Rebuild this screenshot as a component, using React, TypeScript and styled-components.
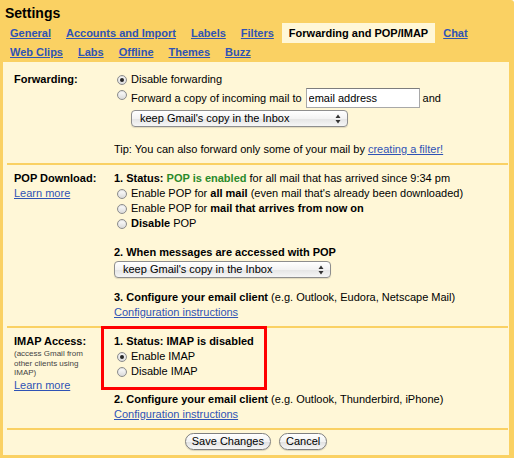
import React from "react";
import styled, { createGlobalStyle, css } from "styled-components";

const GlobalStyle = createGlobalStyle`
  body {
    margin: 0;
    background: #ffffff;
    font-family: "Liberation Sans", Arial, sans-serif;
    font-size: 11px;
    color: #000;
  }
`;

const Frame = styled.div`
  width: 514px;
  box-sizing: border-box;
  padding: 0 5px 3px 3px;
  background: #fad163;
  border-top-right-radius: 3px;
`;

const Title = styled.h1`
  margin: 0;
  padding: 4px 0 0 2px;
  font-size: 14px;
  line-height: 18px;
  font-weight: bold;
`;

const Tabs = styled.div`
  margin-top: 1px;
`;

const TabRow = styled.div`
  display: flex;
  height: 19px;
`;

const Tab = styled.a<{ $active?: boolean }>`
  display: block;
  height: 20px;
  padding: 0 7px;
  margin-right: 1px;
  line-height: 20px;
  font-weight: bold;
  color: #2f53b5;
  text-decoration: underline;
  white-space: nowrap;
  cursor: pointer;

  ${({ $active }) =>
    $active &&
    css`
      background: #fff7d7;
      color: #000;
      text-decoration: none;
    `}
`;

const Panel = styled.div`
  margin-top: 1px;
  padding-top: 4px;
  background: #fff7d7;
`;

const Section = styled.div`
  display: grid;
  grid-template-columns: 100px 1fr;
  margin: 0 1px 0 4px;
  padding: 6px 0 6px 7px;
  border-bottom: 2px solid #fad163;
  line-height: 15px;
  white-space: nowrap;
`;

const Side = styled.div`
  display: flex;
  flex-direction: column;
  align-items: flex-start;
`;

const Label = styled.div`
  font-weight: bold;
`;

const Note = styled.div`
  font-size: 8px;
  line-height: 9.5px;
  color: #444;
`;

const Help = styled.a`
  color: #2f53b5;
  text-decoration: underline;
  cursor: pointer;
`;

const Body = styled.div`
  display: flex;
  flex-direction: column;
  align-items: flex-start;
`;

const Block = styled.div<{ $gap?: number }>`
  margin-top: ${({ $gap }) => $gap ?? 0}px;
`;

const Good = styled.b`
  color: #2a8a2a;
`;

const Option = styled.div`
  display: flex;
  align-items: flex-start;
`;

const Radio = styled.span<{ $checked?: boolean }>`
  position: relative;
  flex: none;
  width: 10px;
  height: 10px;
  box-sizing: border-box;
  margin: 3px 4px 0 3px;
  border-radius: 50%;
  border: 1px solid #8c8c8c;
  background: linear-gradient(#ffffff, #dadada);
  box-shadow: inset 0 1px 1px rgba(0, 0, 0, 0.12);

  ${({ $checked }) =>
    $checked &&
    css`
      &::after {
        content: "";
        position: absolute;
        left: 2px;
        top: 2px;
        width: 4px;
        height: 4px;
        border-radius: 50%;
        background: #262626;
      }
    `}
`;

const OptionText = styled.div`
  display: flex;
  flex-direction: column;
  align-items: flex-start;
`;

const InlineRow = styled.div`
  display: flex;
  align-items: center;
  height: 22px;
`;

const EmailField = styled.input`
  width: 114px;
  height: 20px;
  box-sizing: border-box;
  margin: 0 3px 0 4px;
  padding: 0 2px;
  border: 1px solid #a8a8a8;
  border-top-color: #7d7d7d;
  background: #fff;
  font-family: "Liberation Sans", Arial, sans-serif;
  font-size: 11px;
  color: #000;
  outline: none;
`;

const PopUp = styled.div<{ $gap?: number }>`
  display: flex;
  align-items: center;
  justify-content: space-between;
  width: 217px;
  height: 17px;
  box-sizing: border-box;
  margin-top: ${({ $gap }) => $gap ?? 1}px;
  padding: 0 6px 0 8px;
  border: 1px solid #8e8e8e;
  border-radius: 4px;
  background: linear-gradient(#ffffff, #f3f3f3 50%, #e4e4e4 51%, #f6f6f6);
  box-shadow: 0 1px 1px rgba(0, 0, 0, 0.12);
  line-height: 15px;
`;

const Highlight = styled.div`
  position: relative;

  &::after {
    content: "";
    position: absolute;
    left: -13px;
    top: -8px;
    width: 166px;
    bottom: -11px;
    box-sizing: border-box;
    border: 3px solid #ff0000;
    pointer-events: none;
  }
`;

const Footer = styled.div`
  display: flex;
  justify-content: center;
  gap: 8px;
  padding: 3px 0 5px;
`;

const Button = styled.button`
  height: 17px;
  padding: 0 6px;
  border: 1px solid #7f7f7f;
  border-radius: 9px;
  background: linear-gradient(#ffffff, #f2f2f2 50%, #e0e0e0 51%, #f7f7f7);
  box-shadow: 0 1px 1px rgba(0, 0, 0, 0.15);
  font-family: "Liberation Sans", Arial, sans-serif;
  font-size: 11px;
  line-height: 15px;
  color: #000;
`;

const Arrows = () => (
  <svg width="6" height="10" viewBox="0 0 6 10">
    <path d="M3 0.5 L5.5 4 H0.5 Z M3 9.5 L5.5 6 H0.5 Z" fill="#333" />
  </svg>
);

const rowOne = ["General", "Accounts and Import", "Labels", "Filters", "Forwarding and POP/IMAP", "Chat"];
const rowTwo = ["Web Clips", "Labs", "Offline", "Themes", "Buzz"];

const App: React.FC = () => {
  return (
    <Frame>
      <GlobalStyle />
      <Title>Settings</Title>
      <Tabs>
        {[rowOne, rowTwo].map((row, i) => (
          <TabRow key={i}>
            {row.map((name) => (
              <Tab key={name} $active={name === "Forwarding and POP/IMAP"}>
                {name}
              </Tab>
            ))}
          </TabRow>
        ))}
      </Tabs>

      <Panel>
        <Section>
          <Side>
            <Label>Forwarding:</Label>
          </Side>
          <Body>
            <Option>
              <Radio $checked />
              <span>Disable forwarding</span>
            </Option>
            <Option>
              <Radio />
              <OptionText>
                <InlineRow>
                  Forward a copy of incoming mail to
                  <EmailField readOnly value="email address" />
                  and
                </InlineRow>
                <PopUp>
                  <span>keep Gmail's copy in the Inbox</span>
                  <Arrows />
                </PopUp>
              </OptionText>
            </Option>
            <Block $gap={15}>
              Tip: You can also forward only some of your mail by <Help>creating a filter!</Help>
            </Block>
          </Body>
        </Section>

        <Section>
          <Side>
            <Label>POP Download:</Label>
            <Help>Learn more</Help>
          </Side>
          <Body>
            <div>
              <b>1. Status: </b>
              <Good>POP is enabled</Good> for all mail that has arrived since 9:34 pm
            </div>
            <Option>
              <Radio />
              <span>
                Enable POP for <b>all mail</b> (even mail that's already been downloaded)
              </span>
            </Option>
            <Option>
              <Radio />
              <span>
                Enable POP for <b>mail that arrives from now on</b>
              </span>
            </Option>
            <Option>
              <Radio />
              <span>
                <b>Disable</b> POP
              </span>
            </Option>
            <Block $gap={14}>
              <b>2. When messages are accessed with POP</b>
            </Block>
            <PopUp>
              <span>keep Gmail's copy in the Inbox</span>
              <Arrows />
            </PopUp>
            <Block $gap={12}>
              <b>3. Configure your email client</b> (e.g. Outlook, Eudora, Netscape Mail)
            </Block>
            <Help>Configuration instructions</Help>
          </Body>
        </Section>

        <Section>
          <Side>
            <Label>IMAP Access:</Label>
            <Note>
              (access Gmail from
              <br />
              other clients using
              <br />
              IMAP)
            </Note>
            <Help>Learn more</Help>
          </Side>
          <Body>
            <Highlight>
              <b>1. Status: IMAP is disabled</b>
              <Option>
                <Radio $checked />
                <span>Enable IMAP</span>
              </Option>
              <Option>
                <Radio />
                <span>Disable IMAP</span>
              </Option>
            </Highlight>
            <Block $gap={13}>
              <b>2. Configure your email client</b> (e.g. Outlook, Thunderbird, iPhone)
            </Block>
            <Help>Configuration instructions</Help>
          </Body>
        </Section>

        <Footer>
          <Button>Save Changes</Button>
          <Button>Cancel</Button>
        </Footer>
      </Panel>
    </Frame>
  );
};

export default App;
